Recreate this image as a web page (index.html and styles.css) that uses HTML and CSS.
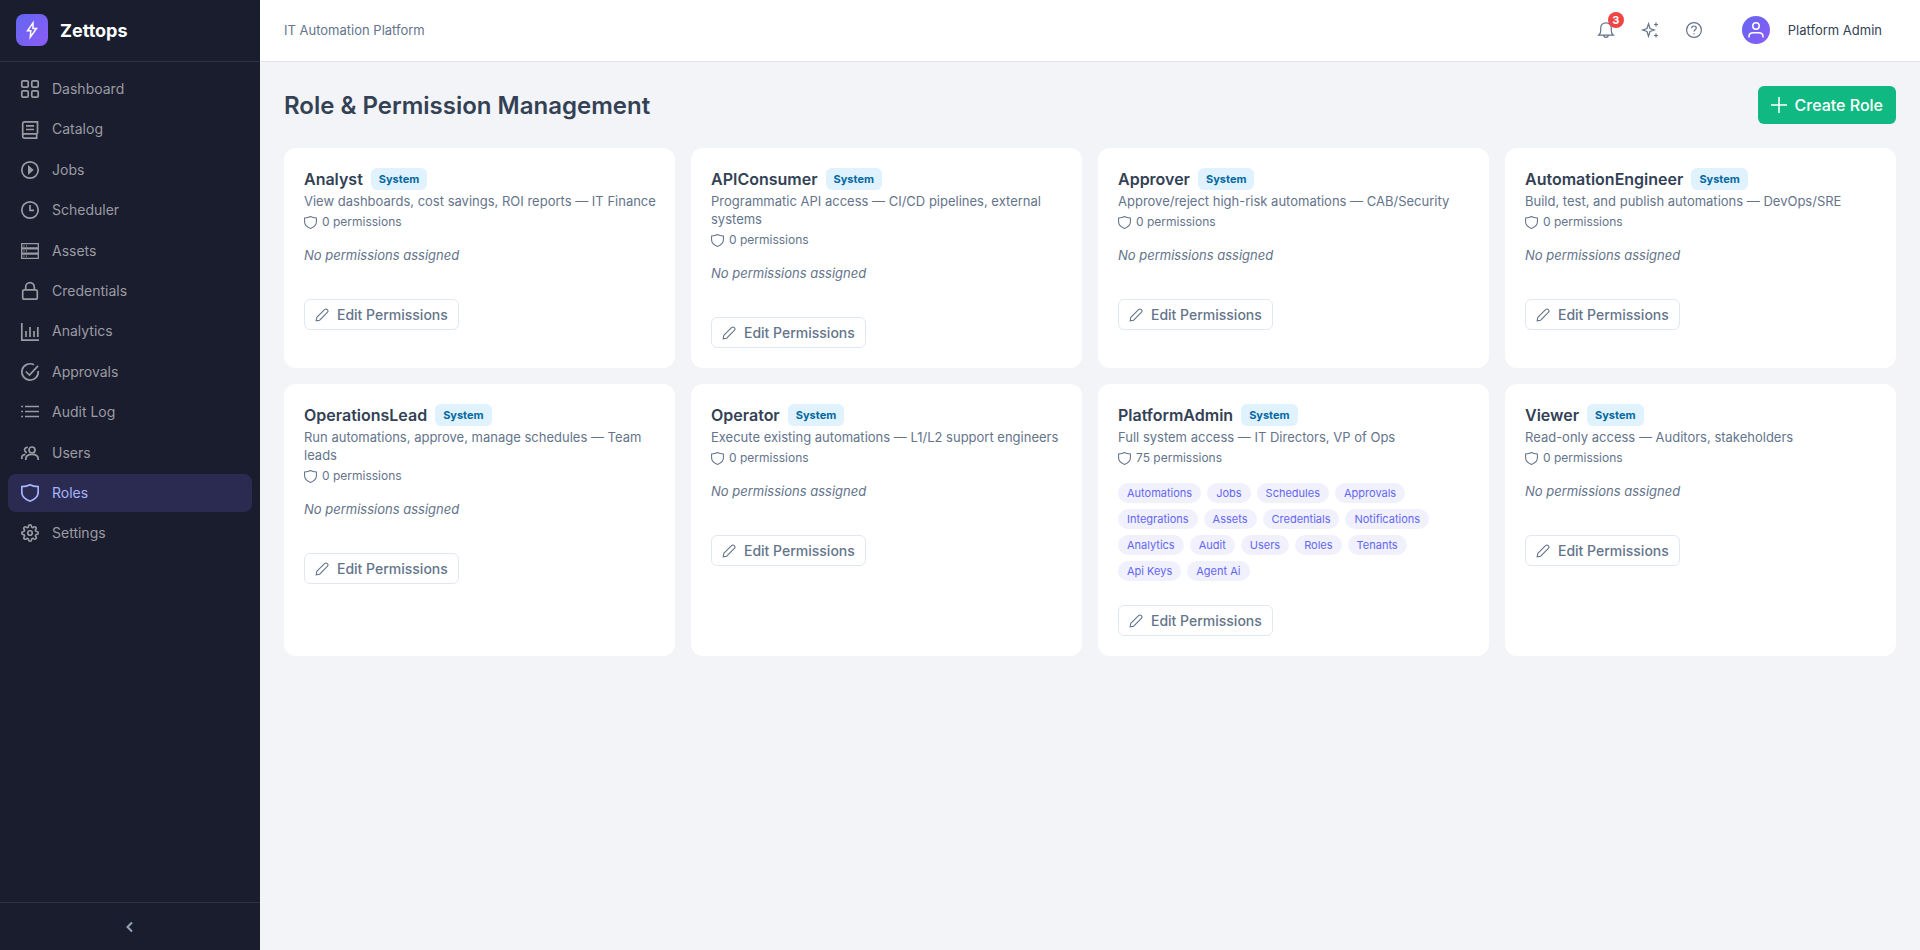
FILE: index.html
```html
<!DOCTYPE html>
<html lang="en">
<head>
<meta charset="utf-8">
<title>Zettops - Roles</title>
<link rel="stylesheet" href="styles.css">
</head>
<body>
<svg class="sprite" aria-hidden="true">
  <symbol id="shield" viewBox="0 0 18 18"><path d="M9 .8C6.8 2.2 4 2.7.8 2.7V8c0 4.300 3.200 7.400 8.200 9.200 5-1.800 8.200-4.900 8.200-9.200V2.700C14 2.700 11.200 2.200 9 .8z"/></symbol>
  <symbol id="pencil" viewBox="0 0 16 16"><path d="M1.300 14.700l.8-4L10.900 1.900a2.230 2.230 0 0 1 3.200 3.200L5.300 13.900z"/></symbol>
</svg>
<div class="app">
  <aside class="sidebar">
    <div class="brand">
      <span class="brand-logo"><svg viewBox="0 0 16 16" class="icon"><path d="M9 .8L3.500 8.800h3.300L6.300 15.200l6.200-8.700H9z"/></svg></span>
      <span class="brand-name">Zettops</span>
    </div>
    <nav class="nav">
      <a class="nav-item" href="#"><svg viewBox="0 0 18 18" class="icon"><rect x=".8" y=".8" width="6.400" height="6.400" rx="1.300"/><rect x="10.800" y=".8" width="6.400" height="6.400" rx="1.300"/><rect x=".8" y="10.800" width="6.400" height="6.400" rx="1.300"/><rect x="10.800" y="10.800" width="6.400" height="6.400" rx="1.300"/></svg>Dashboard</a>
      <a class="nav-item" href="#"><svg viewBox="0 0 18 18" class="icon"><path d="M16.500 12.800V.8H3.500A1.700 1.700 0 0 0 1.700 2.500v13a1.700 1.700 0 0 0 1.800 1.700h13M1.700 14.700c0-1.200.8-1.900 2-1.900h12.800M15.700 12.800v4.400M5 4.800h8M5 8.500h8"/></svg>Catalog</a>
      <a class="nav-item" href="#"><svg viewBox="0 0 18 18" class="icon"><circle cx="9" cy="9" r="8.200"/><path class="solid" d="M7 4l5.700 5L7 14z"/></svg>Jobs</a>
      <a class="nav-item" href="#"><svg viewBox="0 0 18 18" class="icon"><circle cx="9" cy="9" r="8.200"/><path d="M9 4v5.300h4"/></svg>Scheduler</a>
      <a class="nav-item" href="#"><svg viewBox="0 0 18 18" class="icon thin"><path d="M.7 1.700h16.600v4.200H.7zM.7 6.900h16.600v4.200H.7zM.7 12.100h16.600v4.200H.7zM2.500 3.800h1M5 3.800h1M2.500 9h1M5 9h1M2.500 14.200h1M5 14.200h1"/></svg>Assets</a>
      <a class="nav-item" href="#"><svg viewBox="0 0 18 18" class="icon"><rect x="1.700" y="7.800" width="14.600" height="9.400" rx="1.700"/><path d="M4.700 7.800V5a4.300 4.300 0 0 1 8.600 0v2.800"/></svg>Credentials</a>
      <a class="nav-item" href="#"><svg viewBox="0 0 18 18" class="icon"><path d="M.8 0v17.200H18M5 8v6M9 4v10M13 8v6M16.800 4v10"/></svg>Analytics</a>
      <a class="nav-item" href="#"><svg viewBox="0 0 18 18" class="icon"><path d="M13 1.800A8.200 8.200 0 1 0 17.200 8M4.800 8.500l3.700 3.500L17 2.800"/></svg>Approvals</a>
      <a class="nav-item" href="#"><svg viewBox="0 0 18 18" class="icon"><path d="M4 3.500h14M4 8.500h14M4 13.500h14M.2 3.500h1.800M.2 8.500h1.800M.2 13.500h1.800"/></svg>Audit Log</a>
      <a class="nav-item" href="#"><svg viewBox="0 0 18 18" class="icon"><circle cx="11" cy="6" r="3"/><path d="M4.800 16v-1c0-3 2.500-4.700 6.200-4.700s6.200 1.700 6.200 4.700v1M.8 15v-1.300c0-2 1.300-3.200 3.700-3.400M6.800 3.500A2.500 2.500 0 1 0 6 8.400"/></svg>Users</a>
      <a class="nav-item active" href="#" aria-current="page"><svg class="icon"><use href="#shield"/></svg>Roles</a>
      <a class="nav-item" href="#"><svg viewBox="0 0 24 24" class="icon gear"><circle cx="12" cy="12" r="3"/><path d="M19.400 15a1.650 1.650 0 0 0 .33 1.820l.06.06a2 2 0 0 1 0 2.830 2 2 0 0 1-2.830 0l-.06-.06a1.650 1.650 0 0 0-1.820-.33 1.650 1.650 0 0 0-1 1.510V21a2 2 0 0 1-2 2 2 2 0 0 1-2-2v-.09A1.650 1.650 0 0 0 9 19.400a1.650 1.650 0 0 0-1.820.33l-.06.06a2 2 0 0 1-2.830 0 2 2 0 0 1 0-2.830l.06-.06a1.650 1.650 0 0 0 .33-1.820 1.650 1.650 0 0 0-1.510-1H3a2 2 0 0 1-2-2 2 2 0 0 1 2-2h.09A1.650 1.650 0 0 0 4.600 9a1.650 1.650 0 0 0-.33-1.820l-.06-.06a2 2 0 0 1 0-2.830 2 2 0 0 1 2.830 0l.06.06a1.650 1.650 0 0 0 1.820.33H9a1.650 1.650 0 0 0 1-1.510V3a2 2 0 0 1 2-2 2 2 0 0 1 2 2v.09a1.650 1.650 0 0 0 1 1.510 1.650 1.650 0 0 0 1.820-.33l.06-.06a2 2 0 0 1 2.830 0 2 2 0 0 1 0 2.830l-.06.06a1.650 1.650 0 0 0-.33 1.820V9a1.650 1.650 0 0 0 1.510 1H21a2 2 0 0 1 2 2 2 2 0 0 1-2 2h-.09a1.650 1.650 0 0 0-1.510 1z"/></svg>Settings</a>
    </nav>
    <div class="sidebar-foot">
      <button class="collapse" aria-label="Collapse sidebar"><svg viewBox="0 0 16 16" class="icon"><path d="M10 3.500L5.500 8l4.500 4.500"/></svg></button>
    </div>
  </aside>
  <div class="page">
    <header class="topbar">
      <span class="tagline">IT Automation Platform</span>
      <div class="actions">
        <button class="icon-btn" aria-label="Notifications"><svg viewBox="0 0 16 16" class="icon"><path d="M.6 13.200h14.800C14 12 13.300 10.700 13.300 9V6c0-3-2.200-5.200-5.300-5.200S2.700 3 2.700 6v3c0 1.700-.7 3-2.100 4.200zM5.600 13.500c.3 1.200 1.200 1.800 2.400 1.800s2.100-.6 2.400-1.800"/></svg><span class="count">3</span></button>
        <button class="icon-btn" aria-label="Assistant"><svg viewBox="0 0 16 16" class="icon"><path d="M6.500 1.800L8 6.500 12.300 8 8 9.500 6.500 14.200 5 9.500.7 8 5 6.500zM14 .5v4M12 2.500h4M14 11.500v4M12 13.500h4"/></svg></button>
        <button class="icon-btn" aria-label="Help"><svg viewBox="0 0 16 16" class="icon"><circle cx="8" cy="8" r="7.400"/><path d="M5.700 6.200C5.700 4.700 6.700 4 8 4s2.300.8 2.300 2.100C10.300 7.600 8 7.900 8 9.500M8 11.200v1.300"/></svg></button>
        <button class="user"><span class="avatar"><svg viewBox="0 0 16 16" class="icon"><circle cx="8" cy="4" r="3.200"/><path d="M1 15.500v-1c0-2.500 2-3.700 4.500-3.700h5c2.500 0 4.500 1.200 4.500 3.700v1"/></svg></span>Platform Admin</button>
      </div>
    </header>
    <main class="content">
      <div class="page-head">
        <h1 class="page-title">Role &amp; Permission Management</h1>
        <button class="create"><svg viewBox="0 0 16 16" class="icon"><path d="M8 0v16M0 8h16"/></svg>Create Role</button>
      </div>
      <div class="cards">
        <section class="card">
          <div class="card-head"><h2 class="role">Analyst</h2><span class="badge">System</span></div>
          <p class="desc">View dashboards, cost savings, ROI reports — IT Finance</p>
          <p class="perms"><svg class="icon"><use href="#shield"/></svg>0 permissions</p>
          <div class="groups"><em class="none">No permissions assigned</em></div>
          <button class="edit"><svg class="icon"><use href="#pencil"/></svg>Edit Permissions</button>
        </section>
        <section class="card">
          <div class="card-head"><h2 class="role">APIConsumer</h2><span class="badge">System</span></div>
          <p class="desc">Programmatic API access — CI/CD pipelines, external systems</p>
          <p class="perms"><svg class="icon"><use href="#shield"/></svg>0 permissions</p>
          <div class="groups"><em class="none">No permissions assigned</em></div>
          <button class="edit"><svg class="icon"><use href="#pencil"/></svg>Edit Permissions</button>
        </section>
        <section class="card">
          <div class="card-head"><h2 class="role">Approver</h2><span class="badge">System</span></div>
          <p class="desc">Approve/reject high-risk automations — CAB/Security</p>
          <p class="perms"><svg class="icon"><use href="#shield"/></svg>0 permissions</p>
          <div class="groups"><em class="none">No permissions assigned</em></div>
          <button class="edit"><svg class="icon"><use href="#pencil"/></svg>Edit Permissions</button>
        </section>
        <section class="card">
          <div class="card-head"><h2 class="role">AutomationEngineer</h2><span class="badge">System</span></div>
          <p class="desc">Build, test, and publish automations — DevOps/SRE</p>
          <p class="perms"><svg class="icon"><use href="#shield"/></svg>0 permissions</p>
          <div class="groups"><em class="none">No permissions assigned</em></div>
          <button class="edit"><svg class="icon"><use href="#pencil"/></svg>Edit Permissions</button>
        </section>
        <section class="card">
          <div class="card-head"><h2 class="role">OperationsLead</h2><span class="badge">System</span></div>
          <p class="desc">Run automations, approve, manage schedules — Team leads</p>
          <p class="perms"><svg class="icon"><use href="#shield"/></svg>0 permissions</p>
          <div class="groups"><em class="none">No permissions assigned</em></div>
          <button class="edit"><svg class="icon"><use href="#pencil"/></svg>Edit Permissions</button>
        </section>
        <section class="card">
          <div class="card-head"><h2 class="role">Operator</h2><span class="badge">System</span></div>
          <p class="desc">Execute existing automations — L1/L2 support engineers</p>
          <p class="perms"><svg class="icon"><use href="#shield"/></svg>0 permissions</p>
          <div class="groups"><em class="none">No permissions assigned</em></div>
          <button class="edit"><svg class="icon"><use href="#pencil"/></svg>Edit Permissions</button>
        </section>
        <section class="card">
          <div class="card-head"><h2 class="role">PlatformAdmin</h2><span class="badge">System</span></div>
          <p class="desc">Full system access — IT Directors, VP of Ops</p>
          <p class="perms"><svg class="icon"><use href="#shield"/></svg>75 permissions</p>
          <div class="groups">
            <span class="tag">Automations</span><span class="tag">Jobs</span><span class="tag">Schedules</span><span class="tag">Approvals</span><span class="tag">Integrations</span><span class="tag">Assets</span><span class="tag">Credentials</span><span class="tag">Notifications</span><span class="tag">Analytics</span><span class="tag">Audit</span><span class="tag">Users</span><span class="tag">Roles</span><span class="tag">Tenants</span><span class="tag">Api Keys</span><span class="tag">Agent Ai</span>
          </div>
          <button class="edit"><svg class="icon"><use href="#pencil"/></svg>Edit Permissions</button>
        </section>
        <section class="card">
          <div class="card-head"><h2 class="role">Viewer</h2><span class="badge">System</span></div>
          <p class="desc">Read-only access — Auditors, stakeholders</p>
          <p class="perms"><svg class="icon"><use href="#shield"/></svg>0 permissions</p>
          <div class="groups"><em class="none">No permissions assigned</em></div>
          <button class="edit"><svg class="icon"><use href="#pencil"/></svg>Edit Permissions</button>
        </section>
      </div>
    </main>
  </div>
</div>
</body>
</html>
```
FILE: styles.css
```css
* { box-sizing: border-box; }
body {
  margin: 0;
  font-family: Inter, "Liberation Sans", sans-serif;
  font-size: 14px;
  color: #334155;
  background: #f3f4f8;
}
button { font: inherit; color: inherit; background: none; border: 0; padding: 0; cursor: pointer; }
h1, h2, p { margin: 0; }

.sprite { position: absolute; width: 0; height: 0; }
.icon {
  width: 18px;
  height: 18px;
  flex: none;
  fill: none;
  stroke: currentColor;
  stroke-width: 1.5;
  overflow: visible;
}
.nav .icon { stroke-width: 1.7; }
.icon .solid { fill: currentColor; stroke: none; }
.nav .icon.thin { stroke-width: 1.3; }
.nav .icon.gear { stroke-width: 2.2; }

.app { display: flex; min-height: 100vh; }

.sidebar {
  display: flex;
  flex-direction: column;
  flex: 0 0 260px;
  background: #1a1d2e;
  color: #9a9ba3;
}
.brand {
  display: flex;
  align-items: center;
  gap: 12px;
  height: 62px;
  padding: 0 16px 1px;
  border-bottom: 1px solid #2f3241;
}
.brand-logo {
  display: grid;
  place-items: center;
  width: 32px;
  height: 32px;
  border-radius: 8px;
  color: #fff;
  background: linear-gradient(135deg, #6366f1, #8b5cf6);
}
.brand-logo .icon { width: 16px; height: 16px; }
.brand-name { font-size: 18px; font-weight: 700; color: #fff; }
.nav { flex: 1; padding: 8px; }
.nav-item {
  display: flex;
  align-items: center;
  gap: 13px;
  margin-bottom: 2px;
  padding: 8px 13px;
  border-radius: 8px;
  line-height: 1.6;
  color: inherit;
  text-decoration: none;
}
.nav-item.active { color: #a5b4fc; background: #2b2b52; }
.sidebar-foot {
  display: grid;
  place-items: center;
  height: 48px;
  border-top: 1px solid #2f3241;
}
.collapse { display: flex; color: #94a3b8; }
.collapse .icon { width: 16px; height: 16px; stroke-width: 2; }

.page { flex: 1; min-width: 0; }
.topbar {
  display: flex;
  align-items: center;
  justify-content: space-between;
  height: 62px;
  padding: 0 24px 1px;
  background: #fff;
  border-bottom: 1px solid #e2e4ea;
  color: #64748b;
  font-size: 13px;
}
.actions { display: flex; align-items: center; gap: 8px; }
.icon-btn {
  position: relative;
  display: grid;
  place-items: center;
  width: 36px;
  height: 36px;
}
.icon-btn .icon { width: 16px; height: 16px; stroke-width: 1.2; }
.count {
  position: absolute;
  top: 0;
  right: 0;
  width: 16px;
  height: 16px;
  border-radius: 8px;
  background: #ef4444;
  color: #fff;
  font-size: 11px;
  font-weight: 700;
  line-height: 16px;
}
.user {
  display: flex;
  align-items: center;
  gap: 18px;
  margin-left: 8px;
  padding: 0 14px;
  color: #334155;
}
.avatar {
  display: grid;
  place-items: center;
  width: 28px;
  height: 28px;
  border-radius: 50%;
  color: #fff;
  background: linear-gradient(135deg, #6366f1, #8b5cf6);
}
.avatar .icon { width: 16px; height: 16px; }

.content { padding: 24px; }
.page-head {
  display: flex;
  align-items: center;
  justify-content: space-between;
  margin-bottom: 24px;
}
.page-title { padding-top: 2px; font-size: 24px; font-weight: 600; line-height: 36px; }
.create {
  display: flex;
  align-items: center;
  gap: 8px;
  height: 38px;
  padding: 0 13px;
  border-radius: 6px;
  background: #10b981;
  color: #fff;
  font-size: 16px;
  font-weight: 500;
}
.create .icon { width: 16px; height: 16px; }

.cards {
  display: grid;
  grid-template-columns: repeat(4, minmax(0, 1fr));
  gap: 16px;
}
.card { padding: 20px 16px 20px 20px; border-radius: 12px; background: #fff; color: #64748b; }
.card-head { display: flex; align-items: center; gap: 8px; margin-bottom: 2px; }
.role { font-size: 16px; font-weight: 600; line-height: 22px; color: #334155; }
.badge {
  padding: 0 8px;
  border-radius: 6px;
  background: #e0f2fe;
  color: #0369a1;
  font-size: 11px;
  font-weight: 700;
  line-height: 22px;
}
.desc { font-size: 13px; line-height: 18px; }
.perms {
  display: flex;
  align-items: center;
  gap: 5px;
  margin: 2px 0 15px;
  font-size: 12px;
  line-height: 20px;
}
.perms .icon { width: 13px; height: 13px; }
.groups {
  display: flex;
  flex-wrap: wrap;
  align-content: flex-start;
  gap: 6px;
  min-height: 28px;
  margin-bottom: 24px;
}
.none { font-size: 13px; line-height: 16px; }
.tag {
  padding: 0 9px;
  border-radius: 10px;
  background: #f1f1fe;
  color: #6366f1;
  font-size: 11px;
  line-height: 20px;
}
.edit {
  display: flex;
  align-items: center;
  gap: 8px;
  height: 31px;
  padding: 0 10px;
  border: 1px solid #e2e8f0;
  border-radius: 6px;
  font-weight: 500;
}
.edit .icon { width: 14px; height: 14px; stroke-width: 1.2; }
```
